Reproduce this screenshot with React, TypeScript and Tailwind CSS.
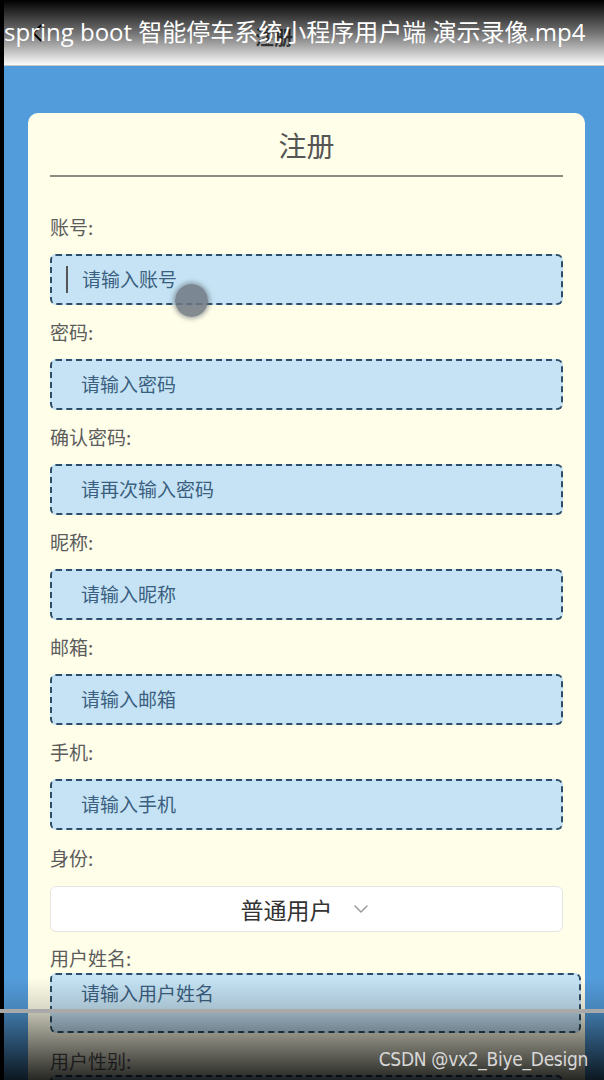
import { ChevronDown, ChevronLeft } from 'lucide-react'

const cjk = { fontFamily: '"Noto Sans CJK SC", "Noto Sans", sans-serif' }

type Field = { label: string; placeholder: string }

const fields: Field[] = [
  { label: '账号:', placeholder: '请输入账号' },
  { label: '密码:', placeholder: '请输入密码' },
  { label: '确认密码:', placeholder: '请再次输入密码' },
  { label: '昵称:', placeholder: '请输入昵称' },
  { label: '邮箱:', placeholder: '请输入邮箱' },
  { label: '手机:', placeholder: '请输入手机' },
]

function Label({ text, className = '' }: { text: string; className?: string }) {
  return <div className={`h-[24px] text-[19px] leading-[24px] text-[#5c5c5c] ${className}`}>{text}</div>
}

function Input({ placeholder, caret }: { placeholder: string; caret?: boolean }) {
  return (
    <div className="flex h-[51px] items-center rounded-[6px] border-2 border-dashed border-[#2c4e6a] bg-[#c5e3f4] pl-[29px]">
      {caret && <div className="-ml-[15px] mr-[14px] h-[27px] w-[2px] bg-[#555]" />}
      <span className="text-[19px] text-[#3b5f80]">{placeholder}</span>
    </div>
  )
}

export default function App() {
  return (
    <div className="relative flex h-[1080px] w-[604px] overflow-hidden bg-black" style={cjk}>
      <div className="w-[4px] shrink-0 bg-black" />
      <div className="flex min-w-0 flex-1 flex-col">
        {/* nav bar */}
        <div className="flex h-[66px] shrink-0 items-center border-b border-[#c9c9c9] bg-white px-[18px]">
          <ChevronLeft className="h-[30px] w-[30px] text-black" strokeWidth={1.5} />
          <div className="flex-1 pr-[90px] pt-[10px] text-center text-[19px] font-bold text-black/70">注册</div>
        </div>

        {/* page */}
        <div className="flex-1 bg-[#539cdb] pl-[24px] pt-[47px]">
          <div className="w-[557px] rounded-[10px] bg-[#fffee9] px-[22px] pb-[40px]">
            <div className="border-b-2 border-[#8c8b80] pb-[11px] pt-[13px] text-center text-[28px] leading-[38px] text-[#555]">
              注册
            </div>
            <div className="pt-[38px]">
              {fields.map((f, i) => (
                <div key={f.label} className="pb-[15px]">
                  <Label text={f.label} className="mb-[15px]" />
                  <Input placeholder={f.placeholder} caret={i === 0} />
                </div>
              ))}
              <Label text="身份:" className="mb-[16px] mt-[1px]" />
              <div className="flex h-[46px] items-center justify-center gap-[16px] rounded-[6px] border border-[#e4e4e0] bg-white">
                <span className="text-[23px] text-[#333]">普通用户</span>
                <ChevronDown className="h-[24px] w-[24px] text-[#9a9a9a]" strokeWidth={1.5} />
              </div>
              <Label text="用户姓名:" className="mt-[14px] mb-[3px]" />
              <div className="h-[60px] w-[531px] rounded-[6px] border-2 border-dashed border-[#2c4e6a] bg-[#c5e3f4] pl-[29px] pt-[6px]">
                <span className="text-[19px] leading-[24px] text-[#3b5f80]">请输入用户姓名</span>
              </div>
              <Label text="用户性别:" className="mt-[16px] mb-[2px]" />
              <div className="h-[51px] rounded-[6px] border-2 border-dashed border-[#2c4e6a] bg-[#c5e3f4]" />
            </div>
          </div>
        </div>
      </div>

      {/* touch indicator */}
      <div className="absolute left-[175px] top-[284px] h-[33px] w-[33px] rounded-full bg-[#6d7780]/85 shadow-[0_0_4px_2px_rgba(90,100,110,0.5)]" />

      {/* video overlay: top */}
      <div className="absolute inset-x-0 top-0 h-[66px] bg-linear-to-b from-black via-black/55 to-transparent" />
      <div
        className="absolute left-[4px] top-[15px] whitespace-nowrap text-[24px] leading-[34px] text-white"
        style={{ fontFamily: '"Open Sans", "Noto Sans CJK SC", sans-serif' }}
      >
        spring boot 智能停车系统小程序用户端 演示录像.mp4
      </div>

      {/* video overlay: bottom */}
      <div className="absolute inset-x-0 top-[978px] h-[31px] bg-linear-to-b from-transparent to-black/15" />
      <div className="absolute inset-x-0 top-[1013px] h-[67px] bg-linear-to-b from-black/25 via-black/55 to-black/85" />
      <div className="absolute inset-x-0 top-[1009px] h-[4px] bg-[#a9a9a9]" />
      <div
        className="absolute right-[16px] top-[1046px] text-[19px] leading-[26px] tracking-[-0.3px] text-[#d8d8d8]"
        style={{ fontFamily: '"Liberation Sans Narrow", "DejaVu Sans Condensed", "Liberation Sans", sans-serif' }}
      >
        CSDN @vx2_Biye_Design
      </div>
    </div>
  )
}
